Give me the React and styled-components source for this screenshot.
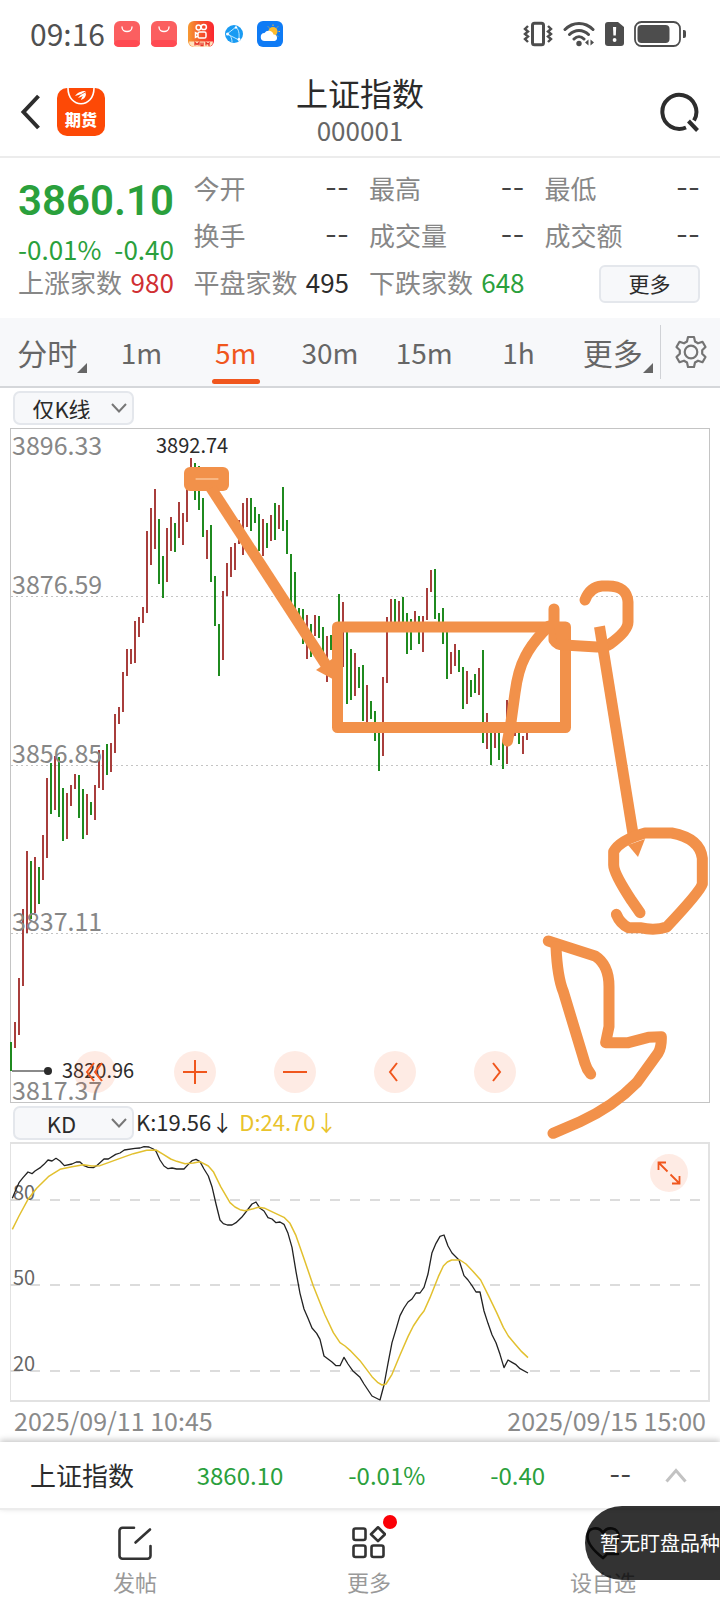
import React from "react";
import styled, { createGlobalStyle } from "styled-components";

const GlobalStyle = createGlobalStyle`
  * { box-sizing: border-box; }
  body {
    margin: 0;
    background: #fff;
    color: #2b2b2b;
    font-family: "Noto Sans CJK SC", "Noto Sans", sans-serif;
  }
  button, select { font: inherit; color: inherit; margin: 0; padding: 0; border: 0; background: none; }
  svg { display: block; }
`;

const GREEN = "#2aa03c";
const RED = "#d02f33";
const ORANGE = "#f0561d";
const GREY = "#878787";
const MARKER = "#f2914a";

const Page = styled.main`
  position: relative;
  overflow: hidden;
`;

const StatusBar = styled.div`
  display: flex;
  align-items: center;
  justify-content: space-between;
  height: 68px;
  padding: 0 34px 0 30px;
`;
const StatusGroup = styled.div`
  display: flex;
  align-items: center;
  gap: ${(p) => p.$gap}px;
`;
const Clock = styled.time`
  font-size: 30px;
  line-height: 38px;
  padding-bottom: 2px;
  color: #505050;
  margin-right: -2px;
`;

const Header = styled.header`
  display: grid;
  grid-template-columns: 1fr auto 1fr;
  align-items: center;
  height: 90px;
  padding: 0 20px;
  border-bottom: 2px solid #ececec;
`;
const HeaderLeft = styled.div`
  display: flex;
  align-items: center;
  gap: 16px;
`;
const IconButton = styled.button`
  display: grid;
  place-items: center;
  justify-self: end;
  cursor: pointer;
`;
const AppBadge = styled.span`
  display: flex;
  flex-direction: column;
  align-items: center;
  width: 48px;
  height: 48px;
  border-radius: 10px;
  background: #fd4906;
  color: #fff;
  font-size: 16px;
  font-weight: 900;
  line-height: 20px;
`;
const TitleBlock = styled.div`
  padding-bottom: 5px;
  text-align: center;
`;
const Title = styled.h1`
  margin: 0;
  font-size: 32px;
  font-weight: 400;
  line-height: 40px;
`;
const Code = styled.div`
  font-size: 26px;
  line-height: 36px;
  color: #666;
`;

const Quote = styled.section`
  display: grid;
  grid-template-columns: repeat(4, minmax(0, 1fr));
  grid-auto-rows: 47px;
  column-gap: 20px;
  padding: 6px 20px 13px 18px;
`;
const PriceColumn = styled.div`
  display: grid;
  grid-template-rows: 74px 22px 43px;
  align-content: start;
  grid-row: span 3;
  color: ${GREEN};
`;
const Price = styled.div`
  font-family: Roboto, sans-serif;
  font-size: 42px;
  font-weight: 600;
  line-height: 74px;
`;
const Change = styled.div`
  display: flex;
  justify-content: space-between;
  font-size: 26px;
  line-height: 22px;
`;
const Stat = styled.div`
  display: flex;
  align-items: center;
  justify-content: space-between;
  font-size: 26px;
  line-height: 36px;
  white-space: nowrap;
  color: ${GREY};
`;
const StatValue = styled.span`
  color: ${(p) => p.$color || "#2b2b2b"};
`;
const Dash = styled.span`
  font-family: Inter, sans-serif;
  font-size: ${(p) => p.$size || 26}px;
  color: #444;
`;
const MoreButton = styled.button`
  align-self: center;
  justify-self: end;
  width: 101px;
  height: 38px;
  margin-top: 4px;
  padding-bottom: 2px;
  border: 2px solid #e4e7ec;
  border-radius: 6px;
  background: #f7f8fa;
  font-size: 21px;
  line-height: 30px;
`;

const TabBar = styled.nav`
  display: flex;
  align-items: center;
  height: 70px;
  background: #f7f8fa;
  border-bottom: 2px solid #d5d7da;
`;
const TabList = styled.div`
  flex: 1;
  display: grid;
  grid-template-columns: repeat(7, 1fr);
  align-self: stretch;
`;
const Tab = styled.button`
  position: relative;
  font-size: ${(p) => (p.$cjk ? 30 : 28)}px;
  color: ${(p) => (p.$active ? ORANGE : "#666")};
  cursor: pointer;
  ${(p) =>
    p.$active &&
    `&::after {
      content: "";
      position: absolute;
      left: 50%;
      bottom: 2px;
      width: 48px;
      height: 5px;
      margin-left: -24px;
      border-radius: 3px;
      background: ${ORANGE};
    }`}
`;
const Corner = styled.svg`
  position: absolute;
  right: 7px;
  bottom: 13px;
`;
const Settings = styled.button`
  display: grid;
  place-items: center;
  width: 60px;
  height: 54px;
  border-left: 1px solid #d0d2d6;
`;

const ControlRow = styled.div`
  display: flex;
  align-items: center;
  height: ${(p) => p.$height}px;
  padding: 0 13px;
  font-size: 22px;
  line-height: 30px;
`;
const SelectBox = styled.label`
  display: grid;
  align-items: center;
  width: 121px;
  height: 34px;
  border: 2px solid #e4e7ec;
  border-radius: 7px;
  background: #f7f8fa;
  & > * { grid-area: 1 / 1; }
  & > svg { justify-self: end; margin-right: 5px; pointer-events: none; }
`;
const Select = styled.select`
  appearance: none;
  width: 100%;
  height: 30px;
  padding: 0 24px 4px 0;
  text-align: center;
  text-align-last: center;
  outline: none;
`;
const Legend = styled.span`
  margin-left: ${(p) => p.$gap}px;
  padding-bottom: 4px;
  color: ${(p) => p.$color};
`;

const PricePanel = styled.section`
  position: relative;
  margin: 0 10px;
  border: 1px solid #c4c4c4;
`;
const KdPanel = styled.section`
  position: relative;
  margin: 0 10px;
  border: 2px solid #e2e2e2;
  border-left-width: 1px;
`;
const Plot = styled.svg`
  width: 100%;
  height: auto;
  overflow: visible;
`;
const Markup = styled.svg`
  position: absolute;
  inset: 0;
  z-index: 2;
  width: 100%;
  height: auto;
  overflow: visible;
  pointer-events: none;
`;
const PlotTools = styled.div`
  position: absolute;
  left: 9%;
  bottom: 9px;
  display: flex;
  gap: 58px;
`;
const RoundButton = styled.button`
  display: grid;
  place-items: center;
  width: ${(p) => p.$size}px;
  height: ${(p) => p.$size}px;
  border-radius: 50%;
  background: rgba(250, 90, 30, 0.12);
  cursor: pointer;
`;
const Expand = styled.div`
  position: absolute;
  top: 10px;
  right: 20px;
`;

const DateRow = styled.div`
  display: flex;
  align-items: center;
  justify-content: space-between;
  height: 40px;
  padding: 0 14px 4px;
  font-size: 25px;
  line-height: 36px;
  color: #8a8a8a;
`;

const Ticker = styled.section`
  display: grid;
  grid-template-columns: 137fr 148fr 147fr 116fr 90fr 18fr;
  align-items: center;
  justify-items: center;
  height: 68px;
  padding: 0 33px 0 30px;
  border-bottom: 2px solid #ececec;
  background: #fff;
  box-shadow: 0 -2px 6px rgba(0, 0, 0, 0.22);
  font-size: 24px;
  line-height: 36px;
  color: ${GREEN};
`;
const TickerName = styled.span`
  justify-self: start;
  font-size: 26px;
  white-space: nowrap;
  color: #2b2b2b;
`;

const Footer = styled.footer`
  position: relative;
`;
const NavArea = styled.div`
  position: relative;
`;
const BottomNav = styled.nav`
  display: grid;
  grid-template-columns: repeat(3, 1fr);
  height: 102px;
  padding-left: 18px;
`;
const NavItem = styled.button`
  display: flex;
  flex-direction: column;
  align-items: center;
  gap: 5px;
  padding-top: 16px;
  font-size: 22px;
  line-height: 32px;
  color: #999;
`;
const NavIcon = styled.span`
  position: relative;
  color: #333;
`;
const RedDot = styled.i`
  position: absolute;
  top: -11px;
  right: -11px;
  width: 14px;
  height: 14px;
  border-radius: 50%;
  background: #fb0007;
`;
const Toast = styled.div`
  position: absolute;
  right: 0;
  top: -4px;
  width: 135px;
  height: 74px;
  padding-left: 15px;
  overflow: hidden;
  border-radius: 37px 0 0 37px;
  background: rgba(0, 0, 0, 0.8);
  color: #fff;
  font-size: 20px;
  line-height: 74px;
  white-space: nowrap;
`;

/* Bars: colour, high and low, one every four units. */
const BARS = `g1042-1071 r1022-1048 r978-1035 r909-986 r851-933 g861-919 r857-913 g867-904 r835-880 r778-858
g763-814 r756-810 g757-817 g788-841 r793-839 r785-806 r774-789 g775-818 g789-839 r794-835
g802-815 r785-820 r750-788 r750-790 g744-775 r743-772 r714-753 r707-724 r672-712 r649-676
r649-664 r621-663 r617-637 r607-623 r531-613 r508-565 r489-549 g519-584 g556-598 r528-582
r517-551 g523-552 r502-538 r513-545 r480-522 r458-487 g463-500 g466-510 g498-537 r530-559
g525-582 g576-626 g624-676 r591-660 r563-596 r547-577 r543-570 r520-544 r503-555 r498-527
g498-531 g507-523 g514-551 r519-556 g523-548 r515-541 g503-540 r505-529 g487-531 g520-554
g554-610 g572-610 g608-630 g609-644 r615-659 g624-657 r615-636 g616-638 g627-657 r636-682
g635-650 g630-650 g594-627 r602-667 g632-704 g649-700 r653-696 g667-688 g665-721 r685-722
g701-719 g711-741 g730-771 r677-756 r617-683 r599-630 g599-630 r601-630 g597-630 g613-654
g619-650 r611-630 g616-644 r616-652 r588-620 r570-592 g569-619 g613-632 g608-644 g630-679
r652-674 r644-666 g650-672 g667-709 r671-704 g680-697 g674-693 r668-695 g650-743 r713-749
g727-765 r727-748 g727-760 g740-769 r700-764 r724-732 r727-736 g730-744 r736-754 r727-740`
  .split(/\s+/)
  .map((bar, i) => {
    const [top, bottom] = bar.slice(1).split("-").map(Number);
    return { x: 11 + 4 * i, top, bottom, up: bar[0] === "r" };
  });

/* Indicator samples in thirds of a plot unit, measured from y = 1130. */
const K_LINE =
  "37:205 45:185 57:158 69:143 84:126 96:131 105:123 122:112 132:103 144:90 156:93 168:85 180:93 193:107 216:102 229:96 240:96 252:107 265:112 280:113 290:107 312:87 325:87 347:73 360:69 373:60 405:55 420:54 432:50 447:51 460:57 468:64 480:90 492:108 504:116 516:114 530:117 552:117 565:103 576:92 588:88 600:95 612:117 625:138 636:170 648:222 660:270 670:281 682:285 696:285 708:278 725:262 740:243 756:222 768:216 780:235 792:243 804:263 816:267 828:278 840:276 852:283 864:310 876:352 888:425 900:490 912:537 924:565 936:594 950:610 960:628 972:678 996:696 1008:707 1020:707 1032:682 1044:702 1058:722 1080:742 1092:762 1116:798 1140:810 1152:765 1164:700 1176:638 1188:598 1200:557 1212:534 1224:516 1236:507 1248:489 1260:489 1272:472 1284:432 1296:368 1308:340 1320:319 1332:315 1344:348 1356:369 1377:390 1392:437 1404:450 1416:467 1428:486 1440:486 1452:543 1464:580 1476:614 1488:638 1500:673 1512:713 1524:690 1536:697 1548:704 1560:716 1584:729";
const D_LINE =
  "37:298 57:258 84:208 110:175 145:140 180:118 216:110 250:104 275:108 300:107 325:98 360:85 400:71 440:61 468:60 490:73 512:87 530:94 555:101 580:99 600:95 625:108 640:125 662:170 690:218 705:231 720:239 735:242 760:236 775:232 795:235 820:247 852:262 870:280 888:317 910:380 940:468 960:518 975:555 1000:608 1020:638 1035:648 1050:661 1080:692 1116:740 1134:758 1146:765 1158:762 1176:733 1200:675 1224:620 1240:588 1260:558 1272:543 1290:503 1315:440 1330:408 1342:396 1355:390 1380:390 1398:402 1420:425 1442:450 1465:496 1490:548 1510:592 1525:618 1545:642 1565:665 1584:683";
const toPoints = (line) =>
  line
    .split(" ")
    .map((p) => p.split(":").map(Number))
    .map(([x, y]) => `${x / 3},${1130 + y / 3}`)
    .join(" ");

const PRICE_LEVELS = [
  ["3896.33", 455],
  ["3876.59", 594],
  ["3856.85", 763],
  ["3837.11", 931],
  ["3817.37", 1100],
];

const BagIcon = () => (
  <svg width="26" height="26" viewBox="0 0 26 26" fill="none">
    <rect width="26" height="26" rx="6" fill="#fb5f60" />
    <rect y="19" width="26" height="7" rx="5" fill="#ff4a52" />
    <path d="M8 6c0 6 10 6 10 0" stroke="#fff" strokeWidth="1.3" strokeLinecap="round" />
  </svg>
);
const VideoIcon = () => (
  <svg width="26" height="26" viewBox="0 0 26 26" fill="none">
    <defs>
      <linearGradient id="video" x1="0" x2="1">
        <stop offset="0" stopColor="#f79a32" />
        <stop offset=".5" stopColor="#f4542c" />
        <stop offset="1" stopColor="#fb2530" />
      </linearGradient>
    </defs>
    <rect width="26" height="26" rx="6" fill="url(#video)" />
    <g stroke="#fff" strokeWidth="1.5">
      <circle cx="10.500" cy="6.500" r="2.400" />
      <circle cx="15.800" cy="6" r="2.600" />
      <rect x="10" y="11" width="8" height="6" rx="1.600" />
      <path d="M10 13l-2.500-1.200v4.500l2.500-1.200" />
    </g>
    <path d="M1 20.500h24a6 6 0 0 1-5 5.500H6a6 6 0 0 1-5-5.500z" fill="#ffe2bd" />
    <path d="M7 24.500v-3l2 2 2-2v3M13 21.500v3h2v-3M18 24.500v-3l2 1.500 2-1.500M21 23v2" stroke="#e8352a" strokeWidth="1.300" />
  </svg>
);
const GlobeIcon = () => (
  <svg width="18" height="20" viewBox="0 0 18 20" fill="none">
    <circle cx="9" cy="10" r="9" fill="#199bf3" />
    <path d="M2 10l9-7M2 10l12 6M11 3c4 4 3 9 3 13M2 10c3 0 5 4 5 8" stroke="#bfe9ff" />
    <circle cx="2.500" cy="10" r="1.500" fill="#fff" />
    <circle cx="11" cy="3.500" r="1.200" fill="#fff" />
    <circle cx="14" cy="15.500" r="1.400" fill="#fff" />
  </svg>
);
const WeatherIcon = () => (
  <svg width="26" height="26" viewBox="0 0 26 26">
    <rect width="26" height="26" rx="6" fill="#0f7bf5" />
    <circle cx="16" cy="10.500" r="4.500" fill="#fdbb2d" />
    <path d="M16 3.500v1.500M21 5.500l-1 1M23 10.500h-1.500M11 5.500l1 1M21 15.500l-1-1" stroke="#fdbb2d" />
    <path d="M8 20a4 4 0 0 1-.5-8 5 5 0 0 1 9 1.500A3.300 3.300 0 0 1 17.500 20z" fill="#fff" />
  </svg>
);

const VibrateIcon = () => (
  <svg width="30" height="26" viewBox="0 0 30 26" fill="none" stroke="#4d4d4d">
    <rect x="9.500" y="2.300" width="11" height="21.500" rx="2" strokeWidth="3" />
    <path d="M5 5l-3 3L5 10.500 2 13 5 15.500 2 18 5 21M25 5l3 3-3 2.500 3 2.500-3 2.500 3 2.500L25 21" strokeWidth="2.400" />
  </svg>
);
const WifiIcon = () => (
  <svg width="32" height="26" viewBox="0 0 32 26" fill="none" stroke="#4d4d4d" strokeLinecap="round">
    <path d="M2 8.500c8-8 20-8 28 0M6.500 13.500c5.500-5.500 13.500-5.500 19 0M11 18c3-3 7-3 10 0" strokeWidth="3" />
    <circle cx="16" cy="22.500" r="2.700" fill="#4d4d4d" stroke="none" />
    <path d="M25.500 18.500v6l-3.500-3zM27.500 18.500v6l3.500-3z" fill="#4d4d4d" stroke="none" />
  </svg>
);
const SimIcon = () => (
  <svg width="19" height="24" viewBox="0 0 19 24">
    <path d="M3 0h10l6 5v16a3 3 0 0 1-3 3H3a3 3 0 0 1-3-3V3a3 3 0 0 1 3-3z" fill="#4d4d4d" />
    <path d="M8 5h3.200l-.4 8.500H8.400z" fill="#fff" />
    <circle cx="9.600" cy="18" r="1.900" fill="#fff" />
  </svg>
);
const BatteryIcon = () => (
  <svg width="52" height="26" viewBox="0 0 52 26">
    <rect x="1" y="1" width="45" height="24" rx="6.500" fill="#fff" stroke="#4d4d4d" strokeWidth="1.800" />
    <rect x="3.500" y="4" width="32" height="18" rx="4" fill="#4d4d4d" />
    <path d="M49 9h1a2 2 0 0 1 2 2v4a2 2 0 0 1-2 2h-1z" fill="#4d4d4d" />
  </svg>
);
const BackIcon = () => (
  <svg width="21" height="36" viewBox="0 0 21 36" fill="none">
    <path d="M18.500 2L3.500 18l15 16" stroke="#2d2d2d" strokeWidth="4" />
  </svg>
);
const BadgeMark = () => (
  <svg width="28" height="21" viewBox="0 0 28 21" fill="none">
    <path d="M1 0c0 21 26 21 26 0" stroke="#fff" strokeWidth="1.600" />
    <path d="M8 8c4-5 8-5 11-5-3 2-6 4-11 5zM11 10c3-4 5-4 8-6-1 3-4 5-8 6zM14 12c1-4 3-5 5-7 0 4-2 6-5 7z" fill="#fff" />
  </svg>
);
const SearchIcon = () => (
  <svg width="40" height="40" viewBox="0 0 40 40" fill="none" stroke="#2d2d2d" strokeWidth="4">
    <path d="M26 35.500A17 17 0 1 1 34 28.500" />
    <path d="M28.500 29l9 9.500" />
  </svg>
);
const GearIcon = () => (
  <svg width="32" height="34" viewBox="0 0 32 34" fill="none" stroke="#747474" strokeWidth="2.200" strokeLinejoin="round">
    <path d="M13 2h6l1 4.500 3 1.800 4.500-1.500 3 5.200-3.300 3.200v3.600l3.300 3.200-3 5.200-4.500-1.500-3 1.800-1 4.500h-6l-1-4.500-3-1.800L4.500 27.200l-3-5.200 3.300-3.200v-3.600L1.500 12l3-5.200L9 8.300l3-1.800z" />
    <circle cx="16" cy="17" r="6.300" />
  </svg>
);
const ChevronDown = () => (
  <svg width="16" height="10" viewBox="0 0 16 10" fill="none">
    <path d="M1 1l7 7.500L15 1" stroke="#777" strokeWidth="2" />
  </svg>
);
const ChevronUp = () => (
  <svg width="22" height="15" viewBox="0 0 22 15" fill="none">
    <path d="M1.500 13.500L11 2.500l9.500 11" stroke="#c2c2c2" strokeWidth="3" />
  </svg>
);
const EditIcon = () => (
  <svg width="34" height="34" viewBox="0 0 34 34" fill="none" stroke="currentColor" strokeWidth="2.600" strokeLinecap="round">
    <path d="M16 1.700H4.500a3 3 0 0 0-3 3v25a3 3 0 0 0 3 3h25a3 3 0 0 0 3-3V20" />
    <path d="M17.500 16.500L32 3.500" />
  </svg>
);
const AppsIcon = () => (
  <svg width="34" height="34" viewBox="0 0 34 34" fill="none" stroke="currentColor" strokeWidth="2.600" strokeLinejoin="round">
    <rect x="1.500" y="2.500" width="12" height="11.500" rx="2" />
    <rect x="1.500" y="19.500" width="12" height="11.500" rx="2" />
    <rect x="19.500" y="19.500" width="12" height="11.500" rx="2" />
    <path d="M26 1.300l7 6.900-7 6.900-7-6.900z" />
  </svg>
);
const HeartIcon = () => (
  <svg width="34" height="34" viewBox="0 0 34 34" fill="none" stroke="currentColor" strokeWidth="2.600" strokeLinecap="round">
    <path d="M17 32C8 25 1.500 18 1.500 10.500 1.500 1 13 0 17 7c4-7 15.500-6 15.500 3.500 0 3-1 5-2.500 7.500M17 32l4-4M22 28h10" />
  </svg>
);

const TOOLS = [
  ["最早", "M9 1L2 10l7 9M17 1l-7 9 7 9", 20],
  ["放大", "M12 0v24M0 12h24", 24],
  ["缩小", "M0 12h24", 24],
  ["向左", "M14 3L7 12l7 9", 24],
  ["向右", "M10 3l7 9-7 9", 24],
];

const SUMMARY = ["今开", "最高", "最低", "换手", "成交量", "成交额"];
const TABS = ["分时", "1m", "5m", "30m", "15m", "1h", "更多"];

function PriceChart() {
  return (
    <PricePanel aria-label="K线图">
      <Plot viewBox="11 429 698 673" fontFamily="Noto Sans CJK SC, sans-serif">
        <g stroke="#c4c4c4" strokeDasharray="2 3">
          {[596, 765, 933].map((y) => (
            <path key={y} d={`M11 ${y + 0.5}h698`} />
          ))}
        </g>
        {BARS.map((b) => (
          <rect key={b.x} x={b.x - 1} y={b.top} width="2" height={b.bottom - b.top} fill={b.up ? "#a83e3c" : "#1f8a1f"} />
        ))}
        <g fontSize="25" fill={GREY}>
          {PRICE_LEVELS.map(([label, y]) => (
            <text key={label} x="12" y={y}>{label}</text>
          ))}
        </g>
        <path d="M12 1071h36" stroke="#8a8a8a" strokeWidth="2" />
        <circle cx="48" cy="1071" r="4" fill="#2b2b2b" />
        <g fontSize="20" fill="#2b2b2b">
          <text x="156" y="453">3892.74</text>
          <text x="62" y="1078">3820.96</text>
        </g>
      </Plot>
      <PlotTools>
        {TOOLS.map(([label, d, size]) => (
          <RoundButton key={label} type="button" aria-label={label} $size={42}>
            <svg width={size} height={size} viewBox={`0 0 ${size} ${size}`} fill="none">
              <path d={d} stroke={ORANGE} strokeWidth="2" />
            </svg>
          </RoundButton>
        ))}
      </PlotTools>
      <Markup viewBox="11 429 698 673" fill="none" stroke={MARKER} strokeWidth="11" strokeLinecap="round" strokeLinejoin="round">
        <rect x="184" y="467" width="45" height="24" rx="6" fill={MARKER} stroke="none" />
        <path d="M196 479h22" stroke="#ffdcba" strokeWidth="1" />
        <path d="M211 488L326 665" strokeLinecap="butt" />
        <path d="M316 670l16-11 8 24z" fill={MARKER} stroke="none" />
        <rect x="337.500" y="627" width="228" height="100.500" />
        <path d="M507.500 741L511 722 515 693Q518 670 525 657 531 645 543 632L549 626" />
        <path d="M554 609v31q3 5 10 5l33 2q9 0 13-3 18-13 18-22v-20q-1-16-20-16h-6q-12 1-17 14" />
        <path d="M554 628h11v15h-8z" fill={MARKER} stroke="none" />
        <path d="M599.500 626.500L634 840" strokeLinecap="butt" />
        <path d="M628 845l17-6-7 18z" fill={MARKER} stroke="none" />
        <g transform="translate(520 780) scale(.33333)" strokeWidth="33">
          <path d="M360 398L335 362Q281 280 281 255V215Q300 180 375 159H455Q540 175 547 235V312Q540 335 440 441 405 453 360 443H325Q300 430 289 403" />
          <path d="M85 483L225 528Q267 555 267 620V740L257 788H325L385 772 424 770Q425 800 415 818L350 908Q280 980 180 1025L99 1060" />
          <path d="M108 500Q112 590 130 635L195 850Q200 868 212 882" />
        </g>
      </Markup>
    </PricePanel>
  );
}

function KdChart() {
  return (
    <KdPanel aria-label="KD">
      <Plot viewBox="11 1144 697 256" fontFamily="Noto Sans CJK SC, sans-serif" fill="none">
        <g stroke="#dcdcdc" strokeWidth="2" strokeDasharray="10 10">
          {[1200, 1285, 1371].map((y) => (
            <path key={y} d={`M10 ${y}h690`} />
          ))}
        </g>
        <g fontSize="20" fill="#666">
          <text x="13" y="1200">80</text>
          <text x="13" y="1285">50</text>
          <text x="13" y="1371">20</text>
        </g>
        <polyline points={toPoints(K_LINE)} stroke="#222" strokeWidth="1.300" strokeLinejoin="round" />
        <polyline points={toPoints(D_LINE)} stroke="#e2c02f" strokeWidth="1.500" strokeLinejoin="round" />
      </Plot>
      <Expand>
        <RoundButton type="button" aria-label="全屏" $size={38}>
          <svg width="24" height="24" viewBox="0 0 24 24" fill="none" stroke={ORANGE} strokeWidth="1.800">
            <path d="M1.500 9V1.500H9M1.500 1.500l9 9M13.500 13.500l9 9M15 22.500h7.500V15" />
          </svg>
        </RoundButton>
      </Expand>
    </KdPanel>
  );
}

export default function App() {
  return (
    <Page>
      <GlobalStyle />
      <StatusBar>
        <StatusGroup $gap={11}>
          <Clock>09:16</Clock>
          <BagIcon />
          <BagIcon />
          <VideoIcon />
          <StatusGroup $gap={14}>
            <GlobeIcon />
            <WeatherIcon />
          </StatusGroup>
        </StatusGroup>
        <StatusGroup $gap={10}>
          <VibrateIcon />
          <WifiIcon />
          <SimIcon />
          <BatteryIcon />
        </StatusGroup>
      </StatusBar>

      <Header>
        <HeaderLeft>
          <IconButton type="button" aria-label="返回"><BackIcon /></IconButton>
          <AppBadge><BadgeMark />期货</AppBadge>
        </HeaderLeft>
        <TitleBlock>
          <Title>上证指数</Title>
          <Code>000001</Code>
        </TitleBlock>
        <IconButton type="button" aria-label="搜索"><SearchIcon /></IconButton>
      </Header>

      <Quote>
        <PriceColumn>
          <Price>3860.10</Price>
          <Change><span>-0.01%</span><span>-0.40</span></Change>
          <Stat>上涨家数<StatValue $color={RED}>980</StatValue></Stat>
        </PriceColumn>
        {SUMMARY.map((label) => (
          <Stat key={label}>{label}<Dash>--</Dash></Stat>
        ))}
        <Stat>平盘家数<StatValue>495</StatValue></Stat>
        <Stat>下跌家数<StatValue $color={GREEN}>648</StatValue></Stat>
        <MoreButton type="button">更多</MoreButton>
      </Quote>

      <TabBar>
        <TabList>
          {TABS.map((tab, i) => {
            const menu = i === 0 || i === 6;
            return (
              <Tab key={tab} type="button" $cjk={menu} $active={tab === "5m"}>
                {tab}
                {menu && (
                  <Corner width="10" height="10" viewBox="0 0 10 10"><path d="M10 0v10H0z" fill="#666" /></Corner>
                )}
              </Tab>
            );
          })}
        </TabList>
        <Settings type="button" aria-label="设置"><GearIcon /></Settings>
      </TabBar>

      <ControlRow $height={40}>
        <SelectBox>
          <Select aria-label="主图" defaultValue="k"><option value="k">仅K线</option></Select>
          <ChevronDown />
        </SelectBox>
      </ControlRow>
      <PriceChart />
      <ControlRow $height={39}>
        <SelectBox>
          <Select aria-label="指标" defaultValue="kd"><option value="kd">KD</option></Select>
          <ChevronDown />
        </SelectBox>
        <Legend $gap={2} $color="#2b2b2b">K:19.56↓</Legend>
        <Legend $gap={6} $color="#e9c32c">D:24.70↓</Legend>
      </ControlRow>
      <KdChart />
      <DateRow><span>2025/09/11 10:45</span><span>2025/09/15 15:00</span></DateRow>

      <Footer>
        <Ticker>
          <TickerName>上证指数</TickerName>
          <span>3860.10</span>
          <span>-0.01%</span>
          <span>-0.40</span>
          <Dash $size={24}>--</Dash>
          <ChevronUp />
        </Ticker>
        <NavArea>
          <BottomNav>
            <NavItem type="button"><NavIcon><EditIcon /></NavIcon>发帖</NavItem>
            <NavItem type="button"><NavIcon><AppsIcon /><RedDot /></NavIcon>更多</NavItem>
            <NavItem type="button"><NavIcon><HeartIcon /></NavIcon>设自选</NavItem>
          </BottomNav>
          <Toast>暂无盯盘品种</Toast>
        </NavArea>
      </Footer>
    </Page>
  );
}
